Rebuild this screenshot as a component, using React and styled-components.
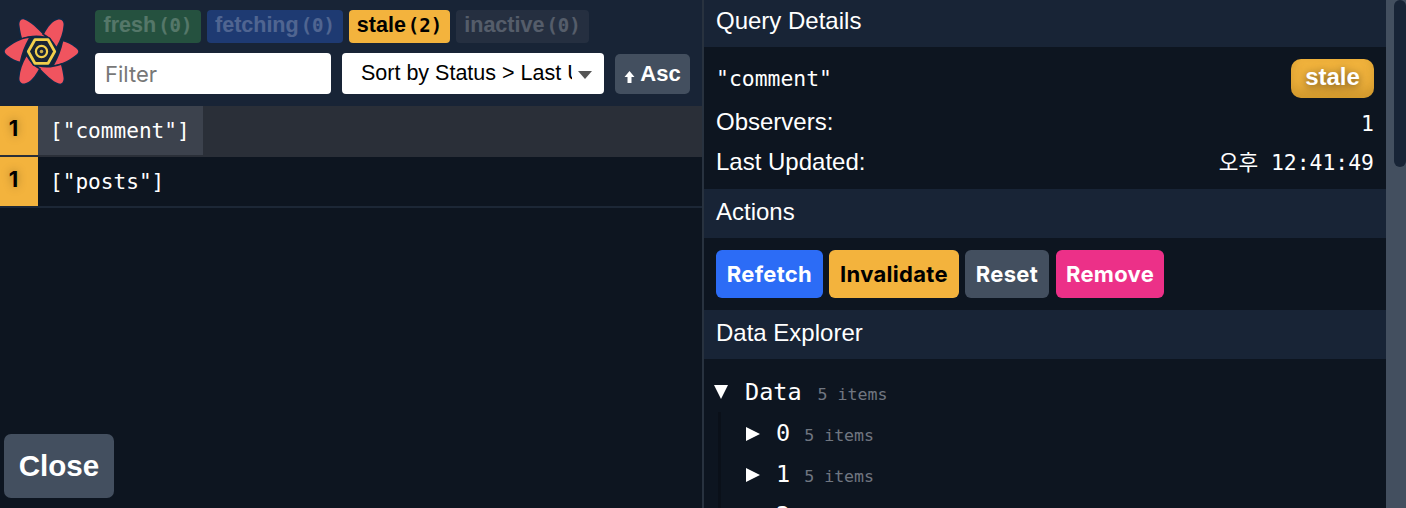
import React from 'react'
import styled, { createGlobalStyle } from 'styled-components';

const GlobalStyle = createGlobalStyle`
  html, body {
    margin: 0;
    padding: 0;
    height: 100%;
    overflow: hidden;
    background: #0d1520;
  }
  #root {
    height: 100%;
  }
`;

const mono = `"DejaVu Sans Mono", "Noto Sans CJK KR", monospace`;

const Page = styled.div`
  display: flex;
  width: 1406px;
  height: 508px;
  overflow: hidden;
  color: #fff;
  font-family: "Liberation Sans", sans-serif;
  background: #0d1520;
`;

const LeftPanel = styled.div`
  position: relative;
  width: 702px;
  flex: none;
  display: flex;
  flex-direction: column;
  border-right: 2px solid #28323f;
`;

const TopBar = styled.div`
  height: 106px;
  flex: none;
  display: flex;
  background: #182436;
`;

const LogoSlot = styled.div`
  width: 95px;
  flex: none;
  display: flex;
  padding-top: 10px;
`;

const Controls = styled.div`
  display: flex;
  flex-direction: column;
  gap: 10px;
  padding-top: 10px;
`;

const TagRow = styled.div`
  display: flex;
  gap: 6px;
`;

const Tag = styled.span`
  box-sizing: border-box;
  display: flex;
  align-items: center;
  justify-content: center;
  gap: 2px;
  height: 33px;
  padding-bottom: 3px;
  width: ${(props) => props.width}px;
  border-radius: 4px;
  background: ${(props) => props.bg};
  color: ${(props) => (props.active ? '#000' : '#fff')};
  font-family: "Liberation Sans", sans-serif;
  font-size: 21.5px;
  font-weight: 700;
  & > * { opacity: ${(props) => (props.active ? 1 : 0.22)}; }
`;

const TagLabel = styled.span``;

const TagCount = styled.code`
  font-family: ${mono};
  font-size: 19px;
  font-weight: 700;
`;

const FilterRow = styled.div`
  display: flex;
  align-items: flex-end;
`;

const FilterInput = styled.input`
  box-sizing: border-box;
  width: 236px;
  height: 41px;
  border: 0;
  border-radius: 4px;
  padding: 0 10px;
  background: #fff;
  font-family: "Inter", sans-serif;
  font-size: 22px;
  color: #0b1521;
  &::placeholder { color: #777; opacity: 1; }
`;

const SelectWrap = styled.div`
  position: relative;
  margin-left: 11px;
  width: 262px;
  height: 41px;
`;

const SortSelect = styled.select`
  appearance: none;
  box-sizing: border-box;
  width: 100%;
  height: 100%;
  border: 0;
  border-radius: 4px;
  padding: 0 32px 2px 19px;
  background: #fff;
  color: #000;
  font-family: "Liberation Sans", sans-serif;
  font-size: 21.5px;
`;

const Caret = styled.span`
  position: absolute;
  right: 12px;
  top: 18px;
  border-left: 7px solid transparent;
  border-right: 7px solid transparent;
  border-top: 8px solid #555;
`;

const SortButton = styled.button`
  box-sizing: border-box;
  display: flex;
  align-items: center;
  justify-content: center;
  gap: 5px;
  margin-left: 11px;
  width: 75px;
  height: 40px;
  border: 0;
  border-radius: 5px;
  padding: 0;
  background: #434f5f;
  color: #fff;
  font-family: "Liberation Sans", sans-serif;
  font-size: 22px;
  font-weight: 700;
`;

const ArrowGlyph = styled.svg`
  width: 11px;
  height: 12px;
  margin-top: 6px;
`;

const QueryList = styled.div`
  flex: 1;
  display: flex;
  flex-direction: column;
`;

const QueryRow = styled.div`
  display: flex;
  height: 51px;
  box-sizing: border-box;
  border-bottom: 2px solid ${(props) => (props.selected ? '#2a2f38' : '#1c2736')};
  background: ${(props) => (props.selected ? '#2a2f38' : 'transparent')};
`;

const QueryCount = styled.div`
  width: 38px;
  flex: none;
  display: flex;
  align-items: flex-start;
  justify-content: center;
  padding: 9px 11px 0 0;
  box-sizing: border-box;
  background: #f3b33d;
  color: #000;
  font-family: "Inter", sans-serif;
  font-size: 22px;
  font-weight: 700;
  text-shadow: 0 0 10px rgba(0, 0, 0, 0.35);
`;

const QueryKey = styled.code`
  display: flex;
  align-items: center;
  padding: 0 13px 0 12px;
  background: ${(props) => (props.selected ? '#3c424d' : 'transparent')};
  font-family: ${mono};
  font-size: 21.1px;
`;

const CloseButton = styled.button`
  position: absolute;
  left: 4px;
  bottom: 10px;
  width: 110px;
  height: 64px;
  border: 0;
  border-radius: 7px;
  background: #434f5f;
  color: #fff;
  font-family: "Liberation Sans", sans-serif;
  font-size: 29.6px;
  font-weight: 700;
`;

const DetailPanel = styled.div`
  flex: 1;
  min-width: 0;
  overflow: hidden;
`;

const SectionTitle = styled.div`
  box-sizing: border-box;
  height: ${(props) => props.height || 49}px;
  padding: ${(props) => props.top || 10}px 12px 0;
  background: #182436;
  font-size: 24px;
  line-height: 26px;
`;

const InfoBlock = styled.div`
  height: 142px;
  box-sizing: border-box;
  padding: 12px 12px 0;
`;

const InfoRow = styled.div`
  display: flex;
  align-items: center;
  justify-content: space-between;
  height: ${(props) => props.height}px;
  font-size: 24px;
`;

const MonoText = styled.code`
  margin-top: ${(props) => props.down || 0}px;
  margin-bottom: ${(props) => props.up || 0}px;
  font-family: ${mono};
  font-size: 21.4px;
`;

const StatusBadge = styled.span`
  display: flex;
  align-items: center;
  justify-content: center;
  width: 83px;
  height: 39px;
  padding-bottom: 4px;
  box-sizing: border-box;
  border-radius: 10px;
  background: #f0b23c;
  box-shadow: inset 0 -8px 12px rgba(120, 80, 0, 0.25);
  font-family: "Liberation Sans", sans-serif;
  font-size: 24px;
  font-weight: 700;
  text-shadow: 0 2px 10px rgba(0, 0, 0, 0.6);
`;

const ActionBar = styled.div`
  display: flex;
  height: 72px;
  box-sizing: border-box;
  padding: 12px 12px 0;
  gap: 6px;
`;

const ActionButton = styled.button`
  box-sizing: border-box;
  height: 48px;
  width: ${(props) => props.width}px;
  margin-left: ${(props) => props.shift || 0}px;
  border: 0;
  border-radius: 6px;
  padding: 0;
  background: ${(props) => props.bg};
  color: ${(props) => props.fg || '#fff'};
  font-family: "Inter", sans-serif;
  font-size: 22px;
  font-weight: 700;
  letter-spacing: 0.3px;
`;

const Explorer = styled.div`
  padding: 12px 12px 0 10px;
  font-family: ${mono};
`;

const ExplorerRow = styled.div`
  display: flex;
  align-items: center;
  height: 41px;
  font-size: 23.5px;
`;

const Arrow = styled.span`
  width: 0;
  height: 0;
  flex: none;
  ${(props) => props.open
    ? `border-left: 7px solid transparent;
       border-right: 7px solid transparent;
       border-top: 14px solid #fff;
       margin-right: 17px;`
    : `border-top: 7.5px solid transparent;
       border-bottom: 7.5px solid transparent;
       border-left: 14px solid #fff;
       margin: 3px 16px 0 0;`}
`;

const ItemCount = styled.span`
  margin-left: ${(props) => props.gap || 14}px;
  margin-top: 6px;
  color: #707680;
  font-size: 16.6px;
`;

const ExplorerChildren = styled.div`
  margin-left: 4px;
  padding-left: 25px;
  border-left: 3px solid #0a1019;
`;

const ScrollTrack = styled.div`
  width: 20px;
  flex: none;
  display: flex;
  justify-content: flex-end;
  background: #434f5f;
`;

const ScrollThumb = styled.div`
  width: 12px;
  height: 167px;
  border-radius: 6px;
  background: #182436;
`;

const PETALS = [
  'M3.3 -15 C-4 -23 -11 -30 -17.5 -32 C-21 -33 -22.5 -29 -22 -26 C-21.5 -22 -20.5 -17 -19.5 -13.5 C-13 -16 -4 -17 3.3 -15 Z',
  'M2.7 -17.5 C6 -24 11 -31 17 -32 C21 -32.5 22.5 -29 22 -26 C21.5 -19 19 -12 15 -5 C12 -10 7.5 -15 2.7 -17.5 Z',
  'M21.7 -10 C27 -9 32 -5.5 35.5 -2.5 C37.5 -0.5 37 1.5 35 3 C29 8 21 12.5 12.7 13.5 C17 6 20 -2 21.7 -10 Z',
];

const HEX = '-13.2,0 -6.6,-11.8 6.6,-11.8 13.2,0 6.6,11.8 -6.6,11.8';

const Logo = () => {
  return (
    <svg width="84" height="84" viewBox="-41.5 -41.5 84 84">
      {[0, 180].map((angle) => PETALS.map((d, i) => (
        <path
          key={`${angle}-${i}`}
          d={d}
          transform={`rotate(${angle})`}
          fill="#f0545f"
          stroke="#0f2a46"
          strokeWidth="3"
          paintOrder="stroke"
        />
      )))}
      <polygon points={HEX} fill="#182436" stroke="#0f2a46" strokeWidth="6" strokeLinejoin="round" />
      <polygon points={HEX} fill="#182436" stroke="#f2cf4b" strokeWidth="2.8" strokeLinejoin="round" />
      <circle r="5.6" fill="none" stroke="#f2cf4b" strokeWidth="2.2" />
      <circle r="1.8" fill="#c9ad4a" />
    </svg>
  );
};

const App = () => {
  return (
    <Page>
      <GlobalStyle />
      <LeftPanel>
        <TopBar>
          <LogoSlot><Logo /></LogoSlot>
          <Controls>
            <TagRow>
              <Tag width={106} bg="#25513f"><TagLabel>fresh</TagLabel><TagCount>(0)</TagCount></Tag>
              <Tag width={136} bg="#1e3a72"><TagLabel>fetching</TagLabel><TagCount>(0)</TagCount></Tag>
              <Tag width={101} bg="#f3b33d" active><TagLabel>stale</TagLabel><TagCount>(2)</TagCount></Tag>
              <Tag width={133} bg="#252f40"><TagLabel>inactive</TagLabel><TagCount>(0)</TagCount></Tag>
            </TagRow>
            <FilterRow>
              <FilterInput placeholder="Filter" />
              <SelectWrap>
                <SortSelect defaultValue="status">
                  <option value="status">Sort by Status &gt; Last Updated</option>
                  <option value="time">Sort by Query Hash</option>
                </SortSelect>
                <Caret />
              </SelectWrap>
              <SortButton>
                <ArrowGlyph viewBox="0 0 11 12"><path d="M5.5 0 L10.5 6 H7.5 V12 H3.5 V6 H0.5 Z" fill="#fff" /></ArrowGlyph>
                Asc
              </SortButton>
            </FilterRow>
          </Controls>
        </TopBar>
        <QueryList>
          <QueryRow selected>
            <QueryCount>1</QueryCount>
            <QueryKey selected>["comment"]</QueryKey>
          </QueryRow>
          <QueryRow>
            <QueryCount>1</QueryCount>
            <QueryKey>["posts"]</QueryKey>
          </QueryRow>
        </QueryList>
        <CloseButton>Close</CloseButton>
      </LeftPanel>
      <DetailPanel>
        <SectionTitle height={47} top={8}>Query Details</SectionTitle>
        <InfoBlock>
          <InfoRow height={39}>
            <MonoText>"comment"</MonoText>
            <StatusBadge>stale</StatusBadge>
          </InfoRow>
          <InfoRow height={48}>
            Observers:
            <MonoText down={2}>1</MonoText>
          </InfoRow>
          <InfoRow height={32}>
            Last Updated:
            <MonoText up={4}>오후 12:41:49</MonoText>
          </InfoRow>
        </InfoBlock>
        <SectionTitle>Actions</SectionTitle>
        <ActionBar>
          <ActionButton width={107} bg="#2c6cf6">Refetch</ActionButton>
          <ActionButton width={130} bg="#f3b33d" fg="#000">Invalidate</ActionButton>
          <ActionButton width={84} bg="#434f5f">Reset</ActionButton>
          <ActionButton width={108} bg="#ec3088" shift={1}>Remove</ActionButton>
        </ActionBar>
        <SectionTitle>Data Explorer</SectionTitle>
        <Explorer>
          <ExplorerRow>
            <Arrow open />Data<ItemCount gap={16}>5 items</ItemCount>
          </ExplorerRow>
          <ExplorerChildren>
            <ExplorerRow>
              <Arrow />0<ItemCount>5 items</ItemCount>
            </ExplorerRow>
            <ExplorerRow>
              <Arrow />1<ItemCount>5 items</ItemCount>
            </ExplorerRow>
            <ExplorerRow>
              <Arrow />2<ItemCount>5 items</ItemCount>
            </ExplorerRow>
          </ExplorerChildren>
        </Explorer>
      </DetailPanel>
      <ScrollTrack>
        <ScrollThumb />
      </ScrollTrack>
    </Page>
  );
};

export default App
